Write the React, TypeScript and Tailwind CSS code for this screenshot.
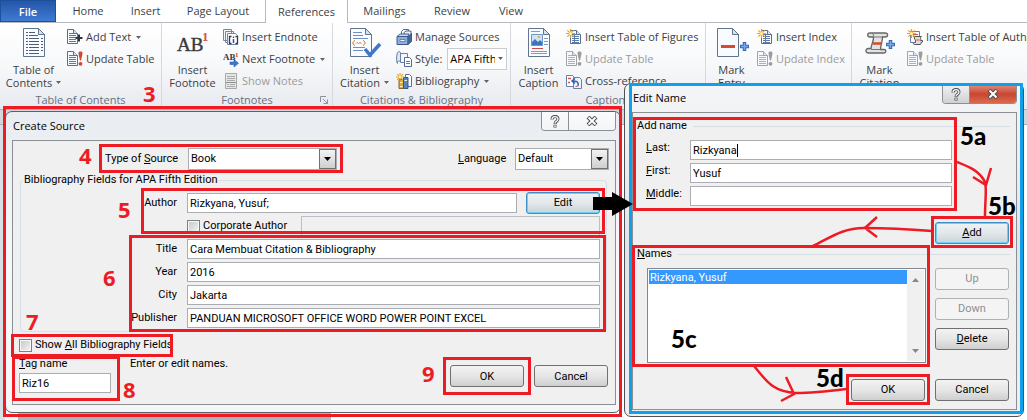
import React from "react";

type Kids = { children?: React.ReactNode };

/* ---------- icons ---------- */

function PageLines({ x = 0, y = 0, w = 12, h = 15, stroke = "#5b6f8c", line = "#5d7ba8" }: { x?: number; y?: number; w?: number; h?: number; stroke?: string; line?: string }) {
  const rows = [];
  for (let i = 4; i < h - 1; i += 2) rows.push(<path key={i} d={`M${x + 2} ${y + i + 0.5}h${w - 4}`} stroke={line} />);
  return (
    <g>
      <path d={`M${x + 0.5} ${y + 0.5}h${w - 5}l4 4v${h - 5}h-${w - 1}z`} fill="#f6f9fd" stroke={stroke} />
      {rows}
      <path d={`M${x + w - 4.5} ${y + 0.5}v4h4`} fill="#dce6f3" stroke={stroke} />
    </g>
  );
}

const Spark = () => (
  <g stroke="#eaa21c" strokeWidth="1.2">
    <path d="M4.500 0v9M0 4.500h9M1.300 1.300l6.400 6.400M7.700 1.300l-6.400 6.400" />
    <circle cx="4.500" cy="4.500" r="1.600" fill="#fff3a8" stroke="none" />
  </g>
);

function Small16({ children }: Kids) {
  return (
    <svg width="16" height="16" viewBox="0 0 16 16" fill="none" className="shrink-0" aria-hidden="true">
      {children}
    </svg>
  );
}

const AddTextIcon = () => (
  <Small16>
    <PageLines w={11} />
    <path d="M3 6.500h5M3 8.500h5" stroke="#d04a3a" />
    <path d="M8.500 9h7M12 5.500v7" stroke="#2d3440" strokeWidth="2" />
  </Small16>
);
const UpdateIcon = ({ off = false }: { off?: boolean }) => (
  <Small16>
    <PageLines w={11} stroke={off ? "#a3a3a3" : "#5b6f8c"} line={off ? "#b0b0b0" : "#5d7ba8"} />
    <path d="M11.500 1.500c0-1.500 4-1.500 4 0 0 3-1 5-1.500 8h-1c-.5-3-1.500-5-1.500-8z" fill={off ? "#9c9c9c" : "#d9432c"} />
    <circle cx="13.500" cy="12.800" r="1.900" fill={off ? "#9c9c9c" : "#d9432c"} />
  </Small16>
);
const EndnoteIcon = () => (
  <Small16>
    <path d="M.5 .5h8v11h-8zM2.500 2.500h8v11h-8z" fill="#f4f8fd" stroke="#7088ad" />
    <path d="M4.500 4.500h8l2 2v9h-10z" fill="#fff" stroke="#7088ad" />
    <path d="M8.500 7.500h-2v7h2M12.500 7.500h2v7h-2" stroke="#333b4a" strokeWidth="1.300" />
    <path d="M10.500 10v4M10.500 7.500v1.500" stroke="#2c4fa0" strokeWidth="1.500" />
  </Small16>
);
const NextFootnoteIcon = () => (
  <Small16>
    <text x="0" y="9" fontSize="9" fontFamily="Liberation Serif, serif" fontWeight="bold" fill="#3b3b3b">AB</text>
    <text x="12" y="6" fontSize="7" fontFamily="Liberation Serif, serif" fontWeight="bold" fill="#d0432f">1</text>
    <path d="M7 11h4V8.500l4.500 3.800-4.500 3.700v-2.500H7z" fill="#3c78cf" stroke="#2a5aa8" strokeWidth=".6" />
  </Small16>
);
const NotesIcon = () => (
  <Small16>
    <path d="M2.500 .5h11v15h-11z" fill="#e6e6e6" stroke="#a8a8a8" />
    <path d="M4 3.500h8M4 5.500h8M4 7.500h8M4 11.500h2M7 11.500h5M4 13.500h8" stroke="#aaa" />
    <path d="M3 9.500h10" stroke="#8e8e8e" />
  </Small16>
);
const SourcesIcon = () => (
  <Small16>
    <path d="M5.500 6V2.500l2-2h5v7" fill="#fff" stroke="#50678c" />
    <path d="M8 6V3.500l2-1.500h5v8" fill="#eaf1fa" stroke="#50678c" />
    <path d="M1 7.500l3-2.500h9l-1.500 3z" fill="#cddcf0" stroke="#44618f" />
    <path d="M1 7.500h11v8H1z" fill="#8fb0dd" stroke="#3c5b8c" />
    <path d="M12 7.500l3.500-3v8L12 15.500z" fill="#45699f" stroke="#3c5b8c" />
    <path d="M4 10.500h5v2H4z" fill="#f0f5fb" stroke="#36527e" strokeWidth=".6" />
  </Small16>
);
const StyleIcon = () => (
  <Small16>
    <path d="M1.500 1.500c2-1.500 3-1 3 1v8c-3-1-4 0-3 2-1.500-3-1-8 0-11z" fill="#dfe8f4" stroke="#6880a4" />
    <path d="M4.500 2.500h7v9h-7z" fill="#f4f8fd" stroke="#6880a4" />
    <path d="M8.500 6.500h5l2 2v7h-7z" fill="#fff" stroke="#566d92" />
    <path d="M10 10.500h4M10 12.500h4" stroke="#c8574d" />
  </Small16>
);
const BibliographyIcon = () => (
  <Small16>
    <path d="M9.500 1.500h4l2 2v10h-6z" fill="#fff" stroke="#5a6f91" />
    <path d="M3 6.500h4.500v9H3z" fill="#e0a93a" stroke="#8e6519" />
    <path d="M7.500 4.500h4.500v11H7.500z" fill="#5784c4" stroke="#33578d" />
    <path d="M8.500 7.500h2.500M4 9.500h2.500M4 13.500h2.500" stroke="#fff2c2" />
    <g transform="scale(.9)"><Spark /></g>
  </Small16>
);
const NewTableIcon = () => (
  <Small16>
    <PageLines x={4} y={1} w={11} h={14} />
    <path d="M8.500 6v8" stroke="#5d7ba8" />
    <Spark />
  </Small16>
);
const CrossRefIcon = () => (
  <Small16>
    <path d="M.5 2.500h6l2 2v9h-8z" fill="#fff" stroke="#6580aa" />
    <path d="M7.500 4.500h6l2 2v9h-8z" fill="#eef4fc" stroke="#6580aa" />
    <path d="M2 5.500h3M2 9.500h2" stroke="#d25849" strokeWidth="1.500" />
    <path d="M12 13c1-4-1-5-5-5M9 5.500L6 8l3 2.500" stroke="#2d5fb8" strokeWidth="1.500" />
    <path d="M9.500 13.500h2" stroke="#d25849" />
  </Small16>
);
const AuthoritiesIcon = () => (
  <Small16>
    <path d="M3.500 2.500h9v11h-9z" fill="#f4f8fd" stroke="#6580aa" />
    <path d="M6 5.500h5M6 7.500h4" stroke="#d25849" />
    <path d="M7.500 7.500h7c-2 1 0 3-1 4h2v1.500h-1l-1 2.500h-6c-1.500 0-1.500-2 0-2h1c1-2-2-4-1-6z" fill="#dedede" stroke="#555" />
    <path d="M9.500 11h3" stroke="#cf4d3a" />
    <Spark />
  </Small16>
);

function Big({ children }: Kids) {
  return (
    <svg width="34" height="34" viewBox="0 0 34 34" fill="none" className="shrink-0" aria-hidden="true">
      {children}
    </svg>
  );
}
const BigPage = ({ children, x = 6, w = 22 }: Kids & { x?: number; w?: number }) => (
  <g>
    <path d={`M${x + 0.5} 2.500h${w - 7}l6 6v22h-${w - 1}z`} fill="#f8fbff" stroke="#63748d" />
    {children}
    <path d={`M${x + w - 6.5} 2.500v6h6z`} fill="#d5e1f0" stroke="#63748d" />
  </g>
);
const TocIcon = () => (
  <Big>
    <BigPage>
      <path d="M9 6.500h9M9 9.500h12M9 12.500h13M9 15.500h13M9 18.500h13M9 21.500h13M9 24.500h13M9 27.500h13" stroke="#4e5d74" strokeDasharray="2 1 12 1" />
      <path d="M24 12.500h2M24 15.500h2M24 18.500h2M24 21.500h2M24 24.500h2" stroke="#4e5d74" />
    </BigPage>
  </Big>
);
const FootnoteIcon = () => (
  <Big>
    <text x="1" y="25" fontSize="19" fontFamily="Liberation Serif, serif" fill="#3a3a3a" stroke="#3a3a3a" strokeWidth=".4">AB</text>
    <text x="26" y="15" fontSize="13" fontFamily="Liberation Serif, serif" fontWeight="bold" fill="#d5523f">1</text>
  </Big>
);
const CitationIcon = () => (
  <Big>
    <BigPage x={2}>
      <path d="M5 6.500h9M5 9.500h10M5 12.500h15M5 21.500h12M5 24.500h10" stroke="#6d8fc2" />
      <path d="M7 14.500c-2 0-1 2.500-2.500 2.500 1.500 0 .5 2.500 2.500 2.500M15 14.500c2 0 1 2.500 2.500 2.500-1.500 0-.5 2.500-2.500 2.500" stroke="#d9822b" />
      <path d="M8 17.500l1-1 1.500 1 1.500-1 1.500 1" stroke="#d9822b" />
    </BigPage>
    <path d="M17 23l5 6L32 18" stroke="#3f76cb" strokeWidth="3.500" />
  </Big>
);
const CaptionIcon = () => (
  <Big>
    <BigPage>
      <path d="M9.500 8.500h11v11h-11z" fill="#cfe2f8" stroke="#6f97cf" />
      <path d="M10 19v-3l3-3 3 3 2-2 2 2v3z" fill="#3d74bd" />
      <circle cx="17" cy="11" r="1.300" fill="#f0b53a" />
      <path d="M10 22.500h11" stroke="#c84c45" />
      <path d="M9 5.500h9M22 12.500h4M22 15.500h4M22 18.500h4M9 25.500h16M9 27.500h16" stroke="#7f9bc5" />
    </BigPage>
  </Big>
);
const EntryIcon = () => (
  <Big>
    <BigPage x={2}>
      <path d="M6 20.500h14" stroke="#d84a2b" strokeWidth="3" />
    </BigPage>
    <path d="M25 20.500h9M29.500 16v9" stroke="#3766b5" strokeWidth="3.500" />
    <path d="M26 20.500h7M29.500 17v7" stroke="#79a8ea" strokeWidth="1.500" />
  </Big>
);
const MarkCitationIcon = () => (
  <Big>
    <path d="M7 7h15c3.500 0 3.500 4 0 4h-2.500c0 5-2 8-2 12.500H21c2.500 0 2.500 3.500 0 3.500H6c-4 0-4-4.500-.5-4.500h2.500c0-4 3-7.500 2.500-11.500H7c-3 0-3-4 0-4z" fill="#e3e3e3" stroke="#666" strokeWidth="1.300" />
    <path d="M9 7.500c2 .5 2 3 .5 3.500h10M17.500 23.500H8" stroke="#777" />
    <path d="M10 17.500h8" stroke="#d84a2b" strokeWidth="2.500" />
    <path d="M23 18.500h9M27.500 14v9" stroke="#3766b5" strokeWidth="3.500" />
    <path d="M24 18.500h7M27.500 15v7" stroke="#79a8ea" strokeWidth="1.500" />
  </Big>
);

const Caret = () => (
  <svg width="5" height="3" viewBox="0 0 5 3" className="shrink-0" aria-hidden="true">
    <path d="M0 0h5L2.500 3z" fill="#5f6368" />
  </svg>
);

/* ---------- ribbon ---------- */

function Group({ children, label, launcher, className }: Kids & { label: string; launcher?: boolean; className: string }) {
  return (
    <section className={`relative flex shrink-0 flex-col border-r border-[#d5d8dd] ${className}`}>
      <div className="flex h-[69px] items-start pt-[3px]">{children}</div>
      <div className="text-center leading-[16px] text-[#67717f]">{label}</div>
      {launcher && (
        <svg width="8" height="8" viewBox="0 0 8 8" fill="none" className="absolute right-1 bottom-[5px]" aria-hidden="true">
          <path d="M.5 6V.5H6M3 3l4 4M7.500 3.500v4h-4" stroke="#8a93a0" />
        </svg>
      )}
    </section>
  );
}

function LargeButton({ icon, lines, caret, className }: { icon: React.ReactNode; lines: [string, string]; caret?: boolean; className: string }) {
  return (
    <button type="button" className={`flex shrink-0 flex-col items-center leading-[13px] ${className}`}>
      {icon}
      <span className="pt-[3px]">{lines[0]}</span>
      <span className="flex items-center gap-1 whitespace-nowrap">
        {lines[1]}
        {caret && <Caret />}
      </span>
    </button>
  );
}

function SmallButton({ icon, children, caret, off }: Kids & { icon: React.ReactNode; caret?: boolean; off?: boolean }) {
  return (
    <button type="button" disabled={off} className={`flex h-[22px] items-center gap-[3px] whitespace-nowrap ${off ? "text-[#9a9a9a]" : ""}`}>
      {icon}
      <span>{children}</span>
      {caret && <span className="pl-[2px]"><Caret /></span>}
    </button>
  );
}

const tabs: [string, string][] = [
  ["Home", "h-[22px] w-[64px]"],
  ["Insert", "h-[22px] w-[51px]"],
  ["Page Layout", "h-[22px] w-[94px]"],
  ["References", "h-[23px] w-[83px] border-x border-[#b6bac0] bg-white"],
  ["Mailings", "h-[22px] w-[73px]"],
  ["Review", "h-[22px] w-[62px]"],
  ["View", "h-[22px] w-[56px]"],
];

function Ribbon() {
  return (
    <header className="overflow-hidden font-['Open_Sans',sans-serif] text-[11px] text-[#3b3f45]">
      <nav className="flex h-[23px] items-start border-b border-[#b6bac0] bg-white leading-[22px]">
        <button type="button" className="h-[22px] w-[56px] border border-[#1c4f9c] bg-linear-to-b from-[#2456a8] to-[#3f7bd4] font-semibold text-white">
          File
        </button>
        {tabs.map(([name, cls]) => (
          <button key={name} type="button" className={`shrink-0 text-center ${cls}`}>
            {name}
          </button>
        ))}
      </nav>
      <div className="flex h-[86px] bg-linear-to-b from-white via-[#f7f8fa] to-[#e6e9ee]">
        <Group label="Table of Contents" className="w-[162px]">
          <LargeButton icon={<TocIcon />} lines={["Table of", "Contents"]} caret className="w-[67px]" />
          <div>
            <SmallButton icon={<AddTextIcon />} caret>Add Text</SmallButton>
            <SmallButton icon={<UpdateIcon />}>Update Table</SmallButton>
          </div>
        </Group>
        <Group label="Footnotes" launcher className="w-[171px]">
          <LargeButton icon={<FootnoteIcon />} lines={["Insert", "Footnote"]} className="w-[61px]" />
          <div>
            <SmallButton icon={<EndnoteIcon />}>Insert Endnote</SmallButton>
            <SmallButton icon={<NextFootnoteIcon />} caret>Next Footnote</SmallButton>
            <SmallButton icon={<NotesIcon />} off>Show Notes</SmallButton>
          </div>
        </Group>
        <Group label="Citations & Bibliography" className="w-[178px]">
          <LargeButton icon={<CitationIcon />} lines={["Insert", "Citation"]} caret className="w-[63px]" />
          <div>
            <SmallButton icon={<SourcesIcon />}>Manage Sources</SmallButton>
            <div className="flex h-[22px] items-center gap-[3px]">
              <StyleIcon />
              <label htmlFor="style">Style:</label>
              <div className="relative ml-[2px]">
                <select id="style" className="h-[22px] w-[60px] appearance-none overflow-hidden border border-[#c9cdd3] bg-white pr-[11px] pl-[2px] text-black">
                  <option>APA Fifth</option>
                </select>
                <span className="pointer-events-none absolute top-[9px] right-1"><Caret /></span>
              </div>
            </div>
            <SmallButton icon={<BibliographyIcon />} caret>Bibliography</SmallButton>
          </div>
        </Group>
        <Group label="Captions" className="w-[195px]">
          <LargeButton icon={<CaptionIcon />} lines={["Insert", "Caption"]} className="w-[55px]" />
          <div>
            <SmallButton icon={<NewTableIcon />}>Insert Table of Figures</SmallButton>
            <SmallButton icon={<UpdateIcon off />} off>Update Table</SmallButton>
            <SmallButton icon={<CrossRefIcon />}>Cross-reference</SmallButton>
          </div>
        </Group>
        <Group label="Index" className="w-[146px]">
          <LargeButton icon={<EntryIcon />} lines={["Mark", "Entry"]} className="w-[51px]" />
          <div>
            <SmallButton icon={<NewTableIcon />}>Insert Index</SmallButton>
            <SmallButton icon={<UpdateIcon off />} off>Update Index</SmallButton>
          </div>
        </Group>
        <Group label="Table of Authorities" className="w-[200px]">
          <LargeButton icon={<MarkCitationIcon />} lines={["Mark", "Citation"]} className="w-[55px]" />
          <div>
            <SmallButton icon={<AuthoritiesIcon />}>Insert Table of Authorities</SmallButton>
            <SmallButton icon={<UpdateIcon off />} off>Update Table</SmallButton>
          </div>
        </Group>
      </div>
    </header>
  );
}

/* ---------- dialog parts ---------- */

const inputCls = "h-5 min-w-0 border border-[#abadb3] bg-white px-[2px] text-black outline-none";

function DialogButton({ children, tone = "normal" }: Kids & { tone?: "normal" | "focus" | "off" }) {
  const tones = {
    normal: "border-[#707070] from-[#f3f3f3] via-[#e6e6e6] to-[#cfcfcf] text-black",
    focus: "border-[#3c8fc4] from-[#f0f3f5] via-[#e2e7ea] to-[#cbd3d8] text-black ring-1 ring-inset ring-[#6fd0f5]",
    off: "border-[#adb2b5] from-[#f4f4f4] via-[#f4f4f4] to-[#f4f4f4] text-[#8f8f8f]",
  };
  return (
    <button type="button" disabled={tone === "off"} className={`h-[22px] w-[74px] shrink-0 rounded-[3px] border bg-linear-to-b pt-px ${tones[tone]}`}>
      {children}
    </button>
  );
}

function Dropdown({ id, value, className }: { id: string; value: string; className: string }) {
  return (
    <div className={`relative ${className}`}>
      <select id={id} className="h-[22px] w-full appearance-none border border-[#abadb3] bg-white pl-[2px] text-black">
        <option>{value}</option>
      </select>
      <span className="pointer-events-none absolute top-px right-px flex h-5 w-[17px] items-center justify-center border border-[#707070] bg-linear-to-b from-[#f3f3f3] to-[#cfcfcf]">
        <svg width="7" height="4" viewBox="0 0 7 4" aria-hidden="true"><path d="M0 0h7L3.500 4z" fill="#000" /></svg>
      </span>
    </div>
  );
}

function Check({ id }: { id: string }) {
  return <input id={id} type="checkbox" className="size-[13px] shrink-0 appearance-none border border-[#7d7f82] bg-linear-to-br from-[#c3c7cc] to-[#f6f6f6] ring-1 ring-inset ring-[#f7f7f7]" />;
}

function WindowButtons({ red = false }: { red?: boolean }) {
  return (
    <div className="flex h-[19px] overflow-hidden rounded-b-[4px] border border-t-0 border-[#8b9096]">
      <button type="button" aria-label="Help" className={`flex w-[27px] items-center justify-center border-r border-[#8b9096] bg-linear-to-b ${red ? "from-[#f1f1f1] to-[#cfd1d3]" : "from-[#f9fafb] to-[#f1f3f5]"}`}>
        <svg width="10" height="13" viewBox="0 0 10 13" fill="none" aria-hidden="true">
          <path d="M2 4.500c0-4 6-4 6-.5 0 2.500-3 2-3 5M5 9.800v2.700" stroke="#4a4f55" strokeWidth="3" />
          <path d="M2 4.300c0-3.500 6-3.500 6-.3 0 2.500-3 2-3 4.500M5 10.300v1.700" stroke="#fff" strokeWidth="1.300" />
        </svg>
      </button>
      <button type="button" aria-label="Close" className={`flex w-[46px] items-center justify-center bg-linear-to-b ${red ? "from-[#e08b7c] via-[#c9452f] to-[#d9694f]" : "from-[#fafbfc] to-[#f3f5f7]"}`}>
        <svg width="12" height="10" viewBox="0 0 12 10" fill="none" aria-hidden="true">
          <path d="M2 1l8 8M10 1L2 9" stroke="#4a4f55" strokeWidth="4" />
          <path d="M2.500 1.500l7 7M9.500 1.500l-7 7" stroke="#fff" strokeWidth="2" />
        </svg>
      </button>
    </div>
  );
}

/* Highlight frame drawn over a set of controls. */
const Frame = ({ className }: { className: string }) => <div aria-hidden="true" className={`pointer-events-none absolute border-3 ${className}`} />;

const Step = ({ children, className }: Kids & { className: string }) => (
  <span className={`absolute font-['Open_Sans',sans-serif] text-[22px] leading-[22px] font-bold text-[#ed1c24] ${className}`}>{children}</span>
);

const SubStep = ({ children, className }: Kids & { className: string }) => (
  <span className={`absolute font-[Lato,sans-serif] text-[24px] leading-[24px] font-black text-black ${className}`}>{children}</span>
);

const fields: [string, string][] = [
  ["Title", "Cara Membuat Citation & Bibliography"],
  ["Year", "2016"],
  ["City", "Jakarta"],
  ["Publisher", "PANDUAN MICROSOFT OFFICE WORD POWER POINT EXCEL"],
];

function CreateSource() {
  return (
    <div role="dialog" aria-label="Create Source" className="absolute top-[111px] left-[5px] w-[616px] rounded-[7px] border border-[#5c6064] bg-linear-to-b from-[#e9edf1] via-[#f6f8fa] to-[#f4f6f8] pr-1 pb-[7px] pl-[6px]">
      <div className="flex h-7 items-start justify-between">
        <h2 className="pt-[6px] pl-[1px] font-['Open_Sans',sans-serif] leading-[16px]">Create Source</h2>
        <WindowButtons />
      </div>
      <form className="border border-[#8b8f94] bg-[#f0f0f0] pt-[7px] pb-[11px]">
        <div className="flex items-center pr-[6px] pl-[92px]">
          <label htmlFor="type" className="w-[83px]">Type of <u>S</u>ource</label>
          <Dropdown id="type" value="Book" className="w-[149px]" />
          <label htmlFor="lang" className="ml-auto w-[57px]"><u>L</u>anguage</label>
          <Dropdown id="lang" value="Default" className="w-[94px]" />
        </div>
        <fieldset className="mt-[2px] mr-2 ml-[7px] min-w-0 rounded-[3px] border border-[#d5dfe5] pt-[5px] pr-[6px] pb-[3px]">
          <legend className="ml-[2px] px-[1px] leading-[16px]">Bibliography Fields for APA Fifth Edition</legend>
          <div className="flex flex-col gap-[3px]">
            <div className="flex h-5 items-center">
              <label htmlFor="author" className="w-[156px] text-right">Author</label>
              <input id="author" defaultValue="Rizkyana, Yusuf;" className={`ml-[10px] mr-[9px] flex-1 ${inputCls}`} />
              <DialogButton tone="focus">Edit</DialogButton>
            </div>
            <div className="flex h-5 items-center gap-[3px] pl-[166px]">
              <Check id="corp" />
              <label htmlFor="corp" className="w-[95px]">Corporate Author</label>
              <input aria-label="Corporate Author" disabled className="h-5 min-w-0 flex-1 border border-[#bcbfc4] bg-[#f0f0f0]" />
            </div>
            {fields.map(([name, value]) => (
              <div key={name} className="flex h-5 items-center gap-[10px]">
                <label htmlFor={name} className="w-[156px] text-right">{name}</label>
                <input id={name} defaultValue={value} className={`flex-1 ${inputCls}`} />
              </div>
            ))}
          </div>
        </fieldset>
        <div className="mt-[5px] flex h-4 items-center gap-[3px] pl-[6px]">
          <Check id="all" />
          <label htmlFor="all">Show <u>A</u>ll Bibliography Fields</label>
        </div>
        <div className="flex items-start pt-[3px] pr-[7px] pl-[6px] leading-[16px]">
          <div className="flex w-[92px] flex-col gap-px">
            <label htmlFor="tag"><u>T</u>ag name</label>
            <input id="tag" defaultValue="Riz16" className={`w-full ${inputCls}`} />
          </div>
          <p className="ml-[19px]">Enter or edit names.</p>
          <div className="mt-[9px] ml-auto flex gap-[10px]">
            <DialogButton>OK</DialogButton>
            <DialogButton>Cancel</DialogButton>
          </div>
        </div>
      </form>
    </div>
  );
}

function Section({ children }: Kids) {
  return (
    <div className="flex h-4 items-center gap-[6px] pr-[6px] pl-1">
      <h3>{children}</h3>
      <div className="h-px flex-1 bg-[#d5dfe5]" />
    </div>
  );
}

function NameField({ id, first, rest, value, active }: { id: string; first: string; rest: string; value: string; active?: boolean }) {
  return (
    <div className="relative flex items-start">
      <label htmlFor={id} className="w-[44px] leading-[15px]"><u>{first}</u>{rest}</label>
      <input id={id} defaultValue={value} className={`w-[262px] ${inputCls}`} />
      {active && <span className="pointer-events-none absolute top-1 left-[91px] h-[13px] w-px bg-black" />}
    </div>
  );
}

const Scroll = ({ d }: { d: string }) => (
  <svg width="7" height="4" viewBox="0 0 7 4" aria-hidden="true"><path d={d} fill="#85898e" /></svg>
);

function EditName() {
  return (
    <div role="dialog" aria-label="Edit Name" className="absolute top-[83px] left-[624px] w-[400px] rounded-[7px] border border-[#4d5055] bg-linear-to-b from-[#f4f5f6] via-[#e2e5e8] to-[#eef0f2] pr-[6px] pb-[6px] pl-[7px]">
      <div className="flex h-7 items-start justify-between">
        <h2 className="pt-[6px] pl-[1px] font-['Open_Sans',sans-serif] leading-[16px]">Edit Name</h2>
        <div className="pt-px"><WindowButtons red /></div>
      </div>
      <form className="border border-[#8b8f94] bg-[#f0f0f0] pt-[5px] pb-2">
        <Section>Add name</Section>
        <div className="mt-[6px] flex flex-col gap-[3px] pl-[13px]">
          <NameField id="last" first="L" rest="ast:" value="Rizkyana" active />
          <NameField id="first" first="F" rest="irst:" value="Yusuf" />
          <NameField id="middle" first="M" rest="iddle:" value="" />
        </div>
        <div className="mt-4 flex justify-end pr-[7px]">
          <DialogButton tone="focus"><u>A</u>dd</DialogButton>
        </div>
        <div className="mt-[2px]"><Section><u>N</u>ames</Section></div>
        <div className="mt-[6px] flex gap-[9px] pr-[7px] pl-[14px]">
          <div className="flex h-[95px] flex-1 border border-[#828790] bg-white p-px">
            <ul role="listbox" aria-label="Names" className="flex-1">
              <li role="option" aria-selected="true" className="bg-[#3399ff] px-px pt-px leading-[13px] text-white">Rizkyana, Yusuf</li>
            </ul>
            <div className="flex w-[17px] flex-col items-center justify-between bg-[#f0f0f0] py-2">
              <Scroll d="M3.500 0L7 4H0z" />
              <Scroll d="M0 0h7L3.500 4z" />
            </div>
          </div>
          <div className="flex flex-col gap-2">
            <DialogButton tone="off">Up</DialogButton>
            <DialogButton tone="off">Down</DialogButton>
            <DialogButton><u>D</u>elete</DialogButton>
          </div>
        </div>
        <div className="mt-4 flex justify-end gap-[10px] pr-[7px]">
          <DialogButton>OK</DialogButton>
          <DialogButton>Cancel</DialogButton>
        </div>
      </form>
    </div>
  );
}

/* ---------- tutorial marks ---------- */

function CreateMarks() {
  return (
    <>
      <Frame className="top-[106px] left-[3px] h-[311px] w-[619px] border-[#ed1c24]" />
      <Frame className="top-[144px] left-[99px] h-[29px] w-[244px] border-[#ed1c24]" />
      <Frame className="top-[188px] left-[141px] h-[46px] w-[464px] border-[#ed1c24]" />
      <Frame className="top-[235px] left-[129px] h-[97px] w-[477px] border-[#ed1c24]" />
      <Frame className="top-[334px] left-[11px] h-[23px] w-[162px] border-[#ed1c24]" />
      <Frame className="top-[356px] left-[12px] h-[45px] w-[108px] border-[#ed1c24]" />
      <Frame className="top-[357px] left-[443px] h-[38px] w-[88px] border-[#ed1c24]" />
      <Step className="top-[82px] left-[143px]">3</Step>
      <Step className="top-[144px] left-[79px]">4</Step>
      <Step className="top-[198px] left-[118px]">5</Step>
      <Step className="top-[266px] left-[103px]">6</Step>
      <Step className="top-[310px] left-[26px]">7</Step>
      <Step className="top-[378px] left-[123px]">8</Step>
      <Step className="top-[362px] left-[422px]">9</Step>
    </>
  );
}

function EditMarks() {
  return (
    <>
      <Frame className="top-[83px] left-[629px] h-[331px] w-[394px] border-[#0fa0ea]" />
      <Frame className="top-[117px] left-[633px] h-[94px] w-[324px] border-[#ed1c24]" />
      <Frame className="top-[216px] left-[931px] h-[32px] w-[82px] border-[#ed1c24]" />
      <Frame className="top-[245px] left-[632px] h-[122px] w-[298px] border-[#ed1c24]" />
      <Frame className="top-[374px] left-[846px] h-[31px] w-[84px] border-[#ed1c24]" />
      <SubStep className="top-[124px] left-[960px]">5a</SubStep>
      <SubStep className="top-[194px] left-[988px]">5b</SubStep>
      <SubStep className="top-[327px] left-[671px]">5c</SubStep>
      <SubStep className="top-[366px] left-[816px]">5d</SubStep>
      <svg width="440" height="240" viewBox="590 180 440 240" fill="none" className="pointer-events-none absolute top-[180px] left-[590px] overflow-visible" aria-hidden="true">
        <path d="M593 197h19v-5l21 12-21 12v-6h-19z" fill="#000" />
        <g stroke="#ed1c24" strokeWidth="2.500">
          <path d="M957 162c10 4 22 8 28 20 2 8 0 18 0 34M973 177l13 8 5-17" />
          <path d="M932 231c-25-2-45-3-68-3-22 0-34 10-51 18M877 217l-12 11 12 9" />
          <path d="M754 366c12 14 18 26 42 27 18 0 34-2 50-4M786 377l8 17-13 7" />
        </g>
      </svg>
    </>
  );
}

export default function App() {
  return (
    <div className="relative flex min-h-screen flex-col overflow-hidden bg-white">
      <Ribbon />
      <main className="flex flex-1 flex-col">
        <div className="h-4 border-y border-[#a9afb7] bg-[#d3d7dc]" />
        <div className="flex flex-1">
          <div className="w-[5px] bg-[#d7e0e6]" />
          <div className="w-[13px] bg-[#f4f7f9]" />
          <div className="w-[313px] bg-[#aab6b9]" />
          <div className="flex-1 bg-white" />
        </div>
      </main>
      <div className="font-[Roboto,sans-serif] text-[11px] text-black">
        <CreateSource />
        <CreateMarks />
        <EditName />
        <EditMarks />
      </div>
    </div>
  );
}
